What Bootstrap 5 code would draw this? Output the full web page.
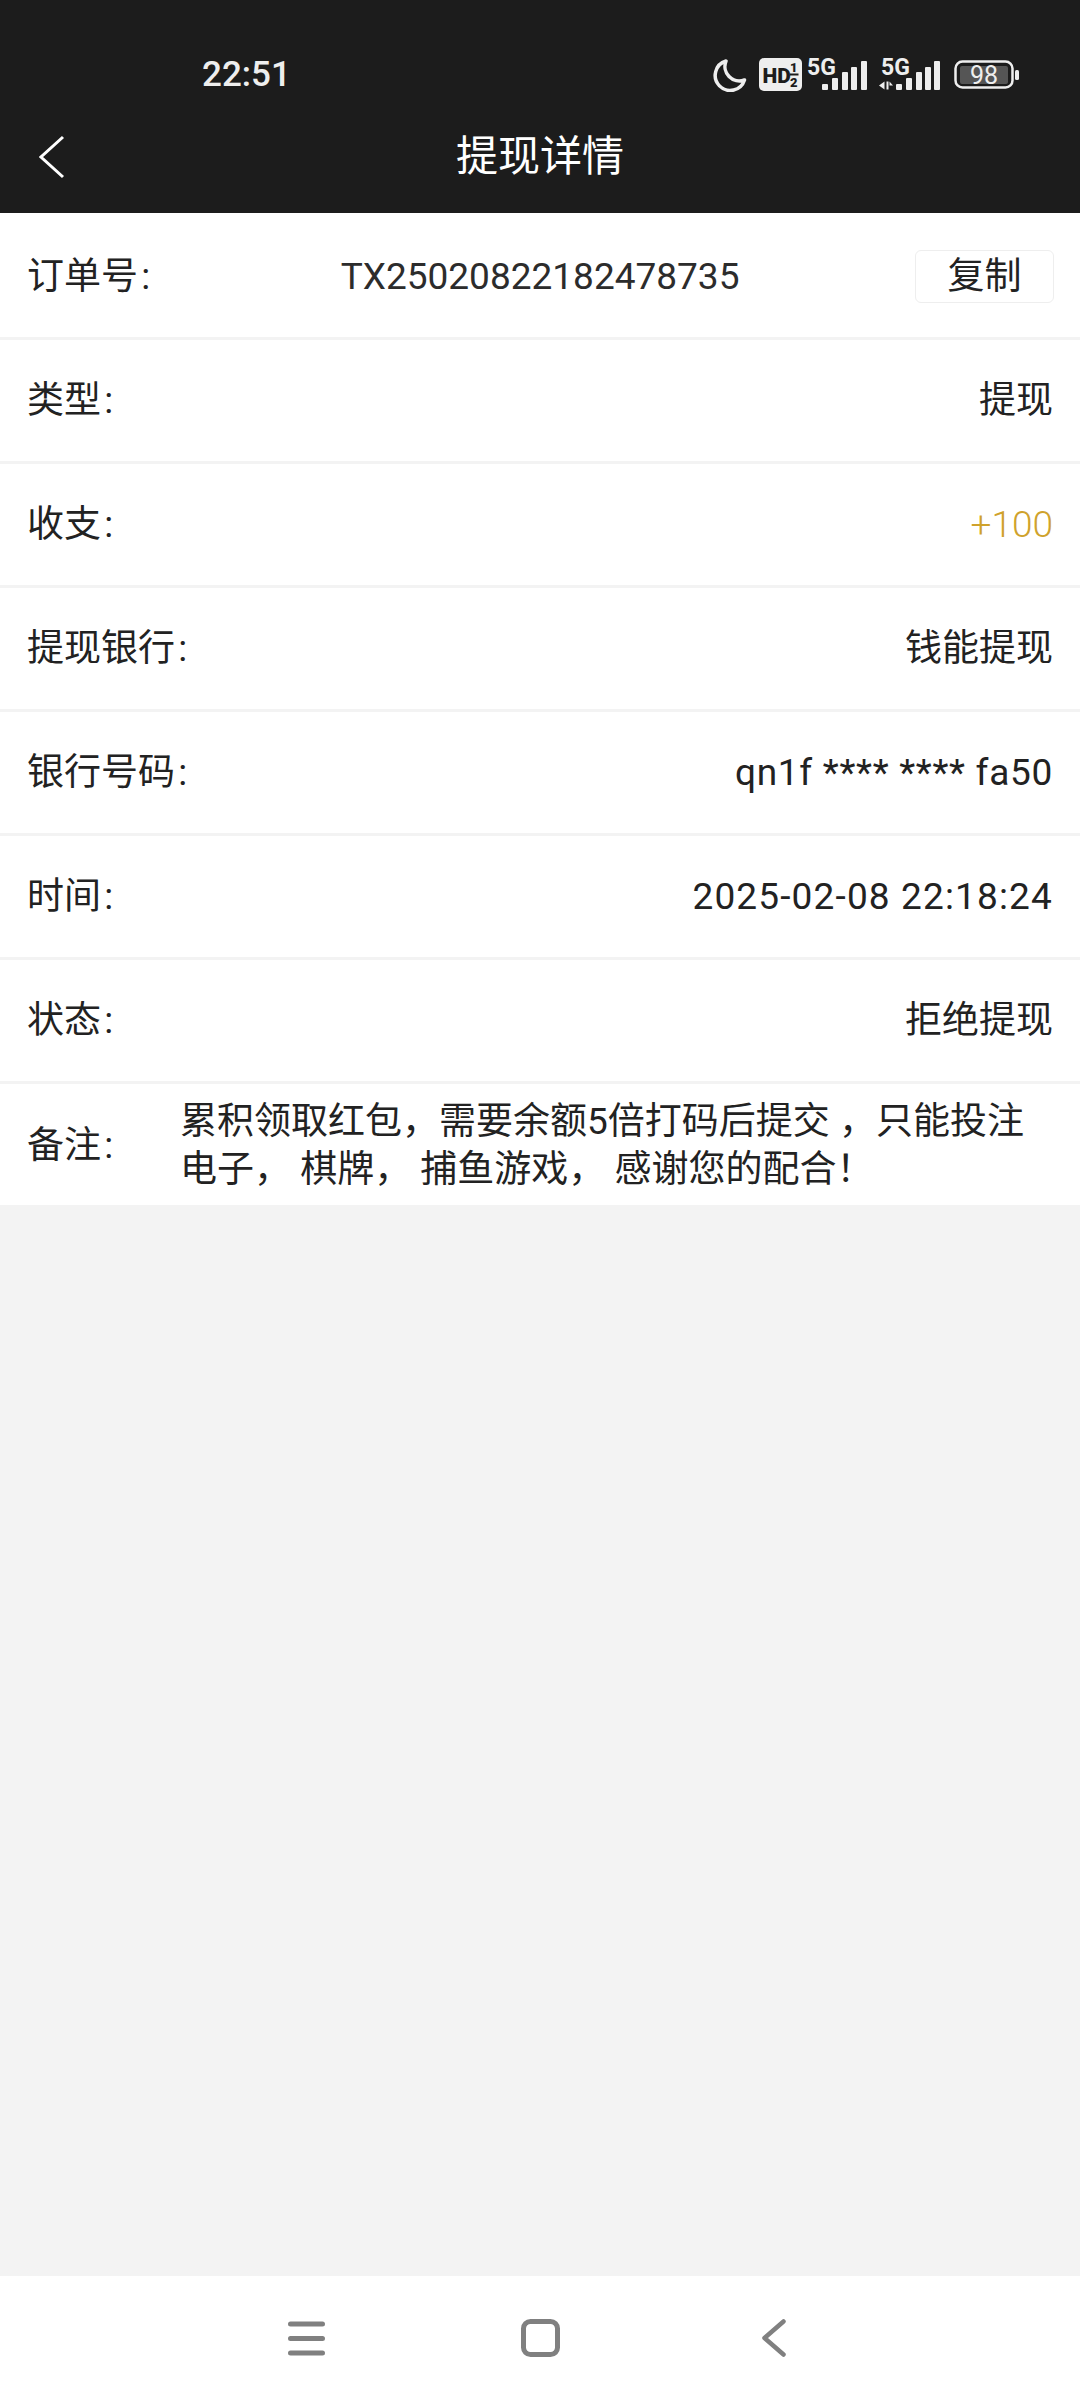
<!DOCTYPE html>
<html lang="zh-CN">
<head>
  <meta charset="UTF-8">
  <title>提现详情</title>
  <meta name="viewport" content="width=device-width, initial-scale=1">
  <link href="https://cdn.jsdelivr.net/npm/bootstrap@5.3.3/dist/css/bootstrap.min.css" rel="stylesheet">
  <style>
    body {
      background-color: #f3f3f3;
      color: #222;
      font-family: Roboto, "Noto Sans CJK SC", sans-serif;
      font-size: 37px;
      line-height: 48px;
    }
    .top-area { background-color: #1c1c1c; height: 213px; }
    .status-row { height: 120px; padding: 29px 60px 0 202px; }
    .clock { color: #eee; font-size: 35px; font-weight: 500; }
    .status-icons { gap: 12px; }
    .status-icons svg { display: block; }
    .status-icons text { font-family: Roboto, sans-serif; }
    .status-icons .sim-one { margin-left: -7px; }
    .status-icons .battery { margin-left: 2px; }
    .title-row { height: 93px; padding: 0 39px 19px; }
    .title-row .side { flex: 1 1 0; }
    .page-title { color: #fff; font-size: 42px; }

    .detail-list { --bs-list-group-border-width: 0; --bs-list-group-bg: #fff; }
    .detail-list .list-group-item {
      height: 124px;
      padding: 0 27px;
      color: #222;
      font-size: 37px;
      border-bottom: 3px solid #f3f3f3;
    }
    .detail-list .list-group-item.order-row { height: 127px; padding-top: 3px; }
    .detail-list .list-group-item.note-row { height: 121px; padding-top: 2px; border-bottom: 0; }
    .item-name { word-spacing: -6px; }
    .order-no { margin-left: 15px; color: #2c2c2c; }
    .wide-digits { letter-spacing: 1.15px; }
    .wide-card { letter-spacing: .7px; }
    .copy-btn {
      --bs-btn-padding-x: 0;
      --bs-btn-padding-y: 0;
      --bs-btn-font-size: 37px;
      --bs-btn-line-height: 50px;
      --bs-btn-color: #222;
      --bs-btn-border-color: #eee;
      --bs-btn-border-radius: 6px;
      width: 139px;
      height: 53px;
      margin-right: -1px;
    }
    .amount-in { color: #cfa22c; font-weight: 300; }
    .note-label { flex: 0 0 153px; }
    .note-text { flex: 1 1 0; padding-right: 20px; }

    .bottom-nav { background-color: #fff; height: 124px; padding-left: 288px; gap: 196px; }
    .bottom-nav svg { display: block; }
    .bottom-nav svg:last-child { margin-left: 6px; }
  </style>
</head>
<body class="d-flex flex-column min-vh-100">

  <header class="top-area">
    <!-- Status bar -->
    <div class="status-row d-flex justify-content-between align-items-center">
      <span class="clock">22:51</span>
      <div class="status-icons d-flex align-items-center">
        <svg width="34" height="34" viewBox="0 0 34 34">
          <path d="M13 3A15 15 0 1 0 31.500 22A14.500 14.500 0 0 1 13 3Z" fill="none" stroke="#eee" stroke-width="3.500" stroke-linejoin="round"/>
        </svg>
        <svg width="43" height="33" viewBox="0 0 43 33">
          <rect width="43" height="33" rx="5" fill="#eee"/>
          <text x="3.500" y="25" font-size="21" font-weight="900" fill="#1c1c1c">HD</text>
          <text x="31" y="14" font-size="13" font-weight="900" fill="#1c1c1c">1</text>
          <rect x="31" y="15.500" width="8.500" height="2" fill="#1c1c1c"/>
          <text x="31" y="29" font-size="13" font-weight="900" fill="#1c1c1c">2</text>
        </svg>
        <!-- First SIM -->
        <svg width="60" height="44" viewBox="0 -6 60 44" class="sim-one">
          <text x="0" y="16" font-size="23" font-weight="700" fill="#eee">5G</text>
          <rect x="15" y="25" width="6" height="6" rx="1" fill="#eee"/>
          <rect x="25" y="19" width="6" height="12" rx="1" fill="#eee"/>
          <rect x="35" y="13" width="6" height="18" rx="1" fill="#eee"/>
          <rect x="44" y="8" width="6" height="23" rx="1" fill="#eee"/>
          <rect x="54" y="2" width="6" height="29" rx="1" fill="#eee"/>
        </svg>
        <!-- Second SIM with data arrows -->
        <svg width="61" height="44" viewBox="0 -6 61 44">
          <text x="2" y="16" font-size="23" font-weight="700" fill="#eee">5G</text>
          <path d="M0 26.500L5.500 22.500V30.500ZM7.500 22.500H9.500V30.500H7.500ZM10.500 22.500L14 26.500H10.500Z" fill="#eee"/>
          <rect x="17" y="25" width="6" height="6" rx="1" fill="#eee"/>
          <rect x="27" y="19" width="6" height="12" rx="1" fill="#eee"/>
          <rect x="37" y="13" width="6" height="18" rx="1" fill="#eee"/>
          <rect x="46" y="8" width="6" height="23" rx="1" fill="#eee"/>
          <rect x="55" y="2" width="6" height="29" rx="1" fill="#eee"/>
        </svg>
        <svg width="66" height="30" viewBox="0 0 66 30" class="battery">
          <rect x="1.500" y="1.500" width="57" height="26" rx="7" fill="none" stroke="#eee" stroke-width="2.500"/>
          <rect x="6" y="6" width="48" height="18" rx="2" fill="#555"/>
          <text x="30" y="24" font-size="25" text-anchor="middle" fill="#eee">98</text>
          <rect x="61" y="10" width="4" height="10" rx="1.500" fill="#eee"/>
        </svg>
      </div>
    </div>

    <!-- Title bar -->
    <div class="title-row d-flex align-items-center">
      <div class="side">
        <svg width="26" height="44" viewBox="0 0 26 44" class="d-block">
          <path d="M24 2L2 22L24 42" fill="none" stroke="#fff" stroke-width="3"/>
        </svg>
      </div>
      <div class="page-title">提现详情</div>
      <div class="side"></div>
    </div>
  </header>

  <main class="flex-grow-1">
    <ul class="list-group list-group-flush detail-list rounded-0">
      <li class="list-group-item order-row d-flex justify-content-between align-items-center">
        <span class="item-name">订单号 :</span>
        <span class="order-no">TX25020822182478735</span>
        <button type="button" class="btn copy-btn">复制</button>
      </li>
      <li class="list-group-item d-flex justify-content-between align-items-center">
        <span class="item-name">类型 :</span><span>提现</span>
      </li>
      <li class="list-group-item d-flex justify-content-between align-items-center">
        <span class="item-name">收支 :</span><span class="amount-in">+100</span>
      </li>
      <li class="list-group-item d-flex justify-content-between align-items-center">
        <span class="item-name">提现银行 :</span><span>钱能提现</span>
      </li>
      <li class="list-group-item d-flex justify-content-between align-items-center">
        <span class="item-name">银行号码 :</span><span class="wide-card">qn1f **** **** fa50</span>
      </li>
      <li class="list-group-item d-flex justify-content-between align-items-center">
        <span class="item-name">时间 :</span><span class="wide-digits">2025-02-08 22:18:24</span>
      </li>
      <li class="list-group-item d-flex justify-content-between align-items-center">
        <span class="item-name">状态 :</span><span>拒绝提现</span>
      </li>
      <li class="list-group-item note-row d-flex align-items-center">
        <span class="note-label item-name">备注 :</span>
        <span class="note-text">累积领取红包，需要余额5倍打码后提交 ，只能投注电子， 棋牌， 捕鱼游戏， 感谢您的配合！</span>
      </li>
    </ul>
  </main>

  <!-- System navigation keys -->
  <nav class="bottom-nav d-flex align-items-center">
    <svg width="37" height="35" viewBox="0 0 37 35">
      <path d="M2.500 3H34.500M2.500 17.500H34.500M2.500 32H34.500" stroke="#808080" stroke-width="5" stroke-linecap="round"/>
    </svg>
    <svg width="39" height="38" viewBox="0 0 39 38">
      <rect x="2.500" y="2.500" width="34" height="33" rx="7" fill="none" stroke="#808080" stroke-width="5"/>
    </svg>
    <svg width="24" height="38" viewBox="0 0 24 38">
      <path d="M21.500 2.500L2.500 19L21.500 35.500" fill="none" stroke="#808080" stroke-width="4.500" stroke-linecap="round" stroke-linejoin="round"/>
    </svg>
  </nav>

  <script src="https://cdn.jsdelivr.net/npm/bootstrap@5.3.3/dist/js/bootstrap.bundle.min.js"></script>
</body>
</html>
